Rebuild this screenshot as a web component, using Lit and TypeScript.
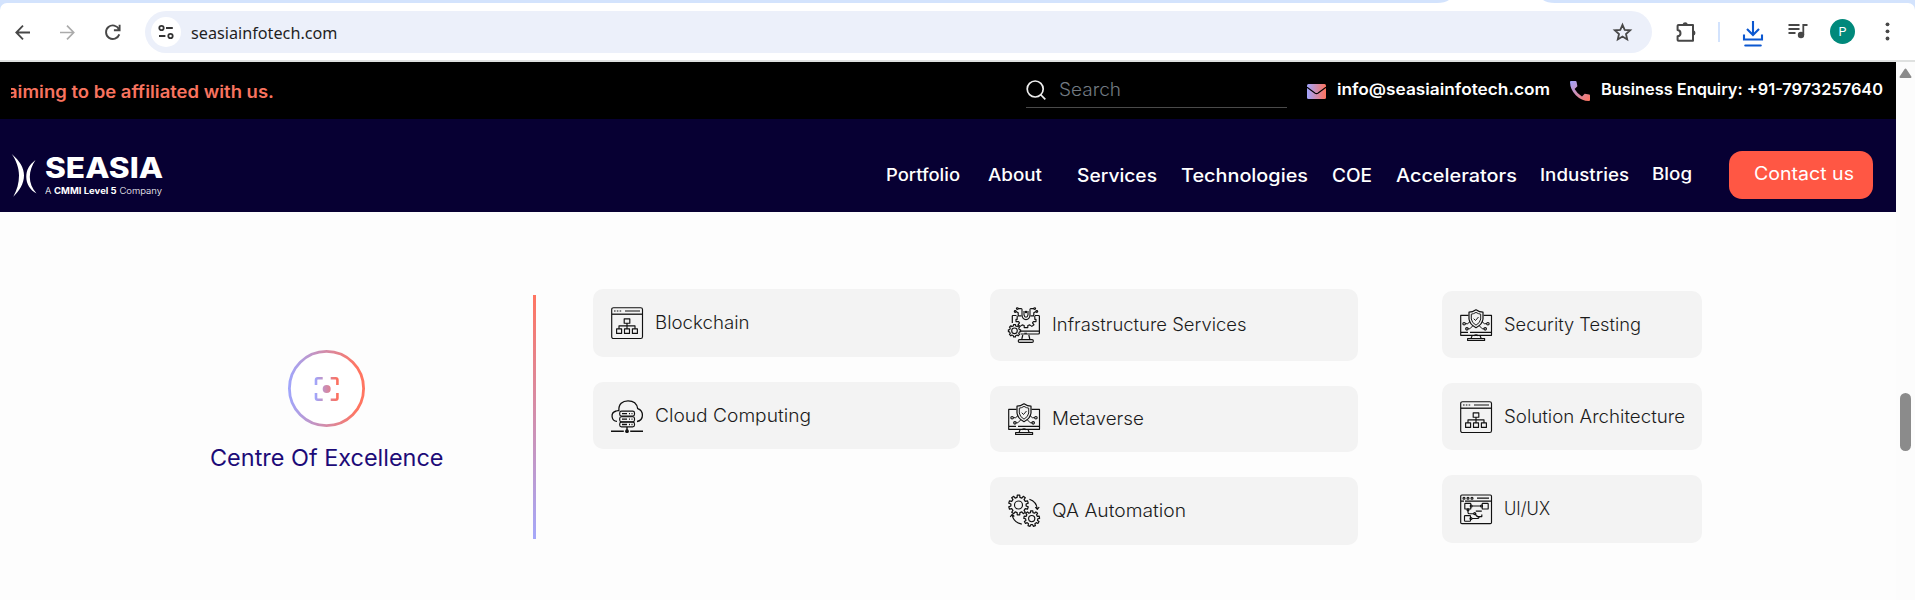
import { LitElement, html, svg, css } from "lit";
import { customElement, property } from "lit/decorators.js";

/** A single line of text stretched (or tracked) to an exact measure. */
@customElement("fit-text")
class FitText extends LitElement {
  @property({ type: Number }) measure = 0;
  @property({ type: Boolean }) track = false;
  static styles = css`
    :host { display: block; flex: none; white-space: nowrap; }
    .line { display: inline-block; transform-origin: 0 50%; }
  `;
  firstUpdated() {
    const line = this.renderRoot.querySelector(".line") as HTMLElement;
    this.style.width = this.measure + "px";
    const natural = line.getBoundingClientRect().width;
    const count = (this.textContent || "").trim().length;
    if (!natural || !count) return;
    if (this.track) line.style.letterSpacing = (this.measure - natural) / count + "px";
    else line.style.transform = `scaleX(${this.measure / natural})`;
  }
  render() {
    return html`<span class="line"><slot></slot></span>`;
  }
}

const gear = (cx: number, cy: number, ro: number, ri: number, n: number) => {
  const pts: string[] = [];
  const step = (Math.PI * 2) / n;
  for (let i = 0; i < n; i++) {
    const a = i * step - Math.PI / 2;
    for (const [r, o] of [[ri, -0.29], [ro, -0.2], [ro, 0.2], [ri, 0.29]]) {
      pts.push(`${(cx + r * Math.cos(a + o * step)).toFixed(2)} ${(cy + r * Math.sin(a + o * step)).toFixed(2)}`);
    }
  }
  return "M" + pts.join("L") + "Z";
};

const chart = svg`
  <rect x=".7" y=".7" width="30.8" height="30.8" rx="1.8"/>
  <path d="M1 7.2H31" stroke-width="1.3"/>
  <path d="M3 4h1.6M5.8 4h1.6M8.6 4h1.6M14 4h15" stroke-width="1.2"/>
  <path d="M13.2 11.8h5.6v4.4h-5.6zM16 16.2v5.6M8 21.8v-3h16v3M5.6 21.8h5v4.6h-5zM13.5 21.8h5v4.6h-5zM21.4 21.8h5v4.6h-5z" stroke-width="1.15"/>`;

const shield = svg`
  <path d="M8.5 6.4H.7V26.3H31.5V6.4H23.6M1 23.4H8M10 23.4H31.2" stroke-width="1.15"/>
  <path d="M12.2 26.6L11 29.4M20 26.6l1.2 2.8M14 26.7q2-1.6 4.2 0M7.6 29.6H24.6V31.5H7.6z" stroke-width="1.15"/>
  <path d="M16 .8Q19.5 3.2 23 3.2V10Q22.3 15.6 16 18.7Q9.7 15.6 9 10V3.2Q12.5 3.2 16 .8z" stroke-width="1.2"/>
  <path d="M16 3.4Q18.6 5 20.7 5.2V10Q20.2 13.8 16 16.2Q11.8 13.8 11.3 10V5.2Q13.4 5 16 3.4zM13.7 9.7l1.8 1.8 3-3.5" stroke-width=".95"/>
  <path d="M5.3 14.7h2.4l2.4-2.3M26.7 14.7h-2.4l-2.4-2.3M8.1 19.8h1.7l3-3M24 19.8h-1.7l-3-3" stroke-width="1"/>
  <circle cx="4.1" cy="14.7" r="1.25"/><circle cx="27.9" cy="14.7" r="1.25"/>
  <circle cx="6.9" cy="19.8" r="1.25"/><circle cx="25.2" cy="19.8" r="1.25"/>`;

const cloud = svg`
  <path d="M6 21.3C.4 21.3-1.2 12.7 5.2 11C7 10.4 7.2 10.8 7.9 10.6C7.3 4 11.6.8 17 .8C22.7.8 26 4 26.7 8.6C33 10.6 33.2 20.4 26 21.5" stroke-width="1.3"/>
  <rect x="8.7" y="11.1" width="14.8" height="5" rx="1.8"/>
  <rect x="8.7" y="16.7" width="14.8" height="5" rx="1.8"/>
  <rect x="8.7" y="22.1" width="14.8" height="4.8" rx="1.8"/>
  <path d="M11 13.7h5M18 13.7h1M20.5 13.7h1M11 19.2h5M18 19.2h1M20.5 19.2h1M11 24.5h5M18 24.5h1M20.5 24.5h1" stroke-width="1.3"/>
  <path d="M16 27v3M0 31.2H12.8M19.2 31.2H32" stroke-width="1.4"/><circle cx="16" cy="31.2" r="1.3" fill="#111"/>`;

const infra = svg`
  <path d="M8.5 8.5H5Q4.3 8.5 4.3 9.3V16M12.6 27H30.2Q31.4 27 31.4 26V9.3Q31.4 8.5 30.4 8.5H27M13 24.2H31.4M14.8 28l-1 4M20.8 28l1 4" stroke-width="1.2"/>
  <rect x="10.3" y="32.6" width="15" height="2.8" rx="1.2"/>
  <path d="M14 1.8V8q.4 4.6 4 4.6T22 8V1.8M16 4V7.8q.5 2.4 2 2.4t2-2.4V4M16.3 26.2h2.6" stroke-width="1.1"/>
  <path d="M9.2 9v3.3h-1.2v2.3h2.6l.9 1.2-1.5 2 2.2 1.6 2-1.5 2 .6v2.1h3.6v-2.1l2-.6 2 1.5 2.2-1.6-1.5-2 .9-1.2h2.6v-2.3h-1.2V9" stroke-width="1.15"/>
  <path d="M10 1.6h3.8M8 4.5l2.2 1.3v3h3.4M26 1.6h-3.8M28 4.5l-2.2 1.3v3h-3.4" stroke-width="1.2"/>
  <circle cx="9.3" cy="1.6" r=".9"/><circle cx="7.2" cy="4.5" r=".9"/><circle cx="26.7" cy="1.6" r=".9"/><circle cx="28.8" cy="4.5" r=".9"/><circle cx="18" cy="5" r=".7"/>
  <path d=${gear(6.5, 23.8, 6.2, 5, 8)} fill="#f3f3f3"/><circle cx="6.5" cy="23.8" r="2.8"/>`;

const gears = svg`
  <path d=${gear(10.5, 10, 9.9, 7.7, 10)} stroke-width="1.25"/><circle cx="10.5" cy="10" r="4"/>
  <path d=${gear(23.7, 23.6, 7.9, 6.1, 9)} stroke-width="1.2"/><circle cx="23.7" cy="23.6" r="3.1"/>
  <path d="M21.4 4.2Q28.6 6.6 29.3 14M27.3 12.2l2 2.2 1.9-2.4M13.8 29.1Q5.5 27.5 4.2 20M2.2 21.8l2-2.3 2.1 2" stroke-width="1.2"/>`;

const flow = svg`
  <rect x=".7" y="1" width="30.8" height="28.6" rx="1.2"/>
  <path d="M1 7.2H4M5 7.2H31M17 4.2H29" stroke-width="1.2"/>
  <circle cx="4" cy="4.2" r="1"/><circle cx="8" cy="4.2" r="1"/><circle cx="12" cy="4.2" r="1"/>
  <rect x="4.8" y="9.4" width="6" height="5.6" rx=".6"/><rect x="22.2" y="9.4" width="6" height="5.6" rx=".6"/><rect x="4.5" y="21.6" width="6" height="5.6" rx=".6"/>
  <path d="M12.2 12H20.6M8 16v2.5q0 1.3 1.4 1.3H14M12 24.5h5q2.2 0 2.2-2" stroke-width="1.1"/>
  <path d="M15.8 17.2H21.8M21.8 20.6V22.6H18Q15.4 22 15.4 19" stroke-width="1.2"/>
  <circle cx="11.2" cy="12" r="1"/><circle cx="21.5" cy="12" r="1"/><circle cx="8" cy="15.8" r="1"/><circle cx="14.7" cy="19.6" r="1"/><circle cx="11" cy="24.5" r="1"/>`;

const icons: Record<string, unknown> = { chart, shield, cloud, infra, gears, flow };

@customElement("service-card")
class ServiceCard extends LitElement {
  @property() icon = "chart";
  @property() label = "";
  @property({ type: Number }) measure = 0;
  @property({ type: Number }) height = 68;
  static styles = css`
    :host { display: block; }
    .card { box-sizing: border-box; display: flex; align-items: center; gap: 12px; padding-left: 18px; border-radius: 10px; background: #f3f3f3; }
    .icon { flex: none; width: 32px; overflow: visible; fill: none; stroke: #111; stroke-width: 1.15; stroke-linejoin: round; }
    .label { font: 300 18px/27px Inter, sans-serif; color: #1b1b1b; margin-bottom: 1px; }
  `;
  render() {
    const h = this.icon === "infra" ? 36 : this.icon === "flow" ? 31 : 32;
    return html`<div class="card" style="height:${this.height}px">
      <svg class="icon" height=${h} viewBox="0 0 32 ${h}">${icons[this.icon]}</svg>
      <fit-text class="label" .measure=${this.measure}>${this.label}</fit-text>
    </div>`;
  }
}

type Card = [string, string, number, number];
const columns: { cls: string; cards: Card[] }[] = [
  { cls: "first", cards: [["chart", "Blockchain", 94.5, 68], ["cloud", "Cloud Computing", 156, 67]] },
  { cls: "second", cards: [["infra", "Infrastructure Services", 194.5, 72], ["shield", "Metaverse", 92, 66], ["gears", "QA Automation", 134, 68]] },
  { cls: "third", cards: [["shield", "Security Testing", 137, 67], ["chart", "Solution Architecture", 181, 67], ["flow", "UI/UX", 46, 68]] },
];

/* label, width, space before, type size, baseline drop */
const nav: [string, number, number, number, number][] = [
  ["Portfolio", 74, 0, 17, 0],
  ["About", 54, 28, 17, 0],
  ["Services", 80, 34.5, 18, 1],
  ["Technologies", 127, 24, 18, 1],
  ["COE", 40, 24, 18, 1],
  ["Accelerators", 121, 24, 18, 1],
  ["Industries", 89, 23, 17, 0],
  ["Blog", 40, 23, 17, -1],
];

@customElement("app-root")
class AppRoot extends LitElement {
  static styles = css`
    :host { display: flex; flex-direction: column; width: 1915px; height: 600px; overflow: hidden; background: #fdfdfd; font-family: Inter, sans-serif; }
    svg { display: block; flex: none; overflow: visible; }
    .strip { flex: none; height: 3px; background: #d3e3fd; }
    .tab { display: block; width: 1915px; height: 3px; }
    .toolbar-wrap { flex: none; height: 57px; background: #d3e3fd; border-bottom: 2px solid #dfe1e0; }
    .toolbar { box-sizing: border-box; height: 57px; display: flex; align-items: center; background: #fff; border-radius: 7px 7px 0 0; padding: 1px 0 0 15px; }
    .toolbar .forward { margin-left: 30px; }
    .toolbar .reload { margin-left: 29px; }
    .pill { box-sizing: border-box; flex: none; margin-left: 23px; width: 1507px; height: 42px; border-radius: 21px; background: #ecf0fa; display: flex; align-items: center; padding: 0 20px 0 6px; }
    .site { width: 30px; height: 30px; border-radius: 50%; background: #fff; display: grid; place-items: center; }
    .url { margin-left: 10px; padding-top: 1px; font: 400 17px/24px "Noto Sans", sans-serif; color: #1f1f1f; }
    .star { margin-left: auto; }
    .ext { margin-left: 24px; }
    .divider { width: 2px; height: 20px; margin-left: 21px; background: #d3e3fd; flex: none; }
    .download { margin: 4px 0 0 22px; }
    .media { margin: -3px 0 0 24px; }
    .avatar { flex: none; margin: -1px 0 0 22px; width: 25px; height: 25px; border-radius: 50%; background: #00897b; color: #fff; font: 400 12.5px/25px Roboto, sans-serif; text-align: center; }
    .menu { margin: -1px 0 0 30px; }
    .body { flex: 1; display: flex; min-height: 0; }
    .page { width: 1896px; flex: none; }
    .top { height: 57px; background: #000; display: flex; align-items: flex-start; color: #fff; }
    .ticker { box-sizing: border-box; width: 264px; margin: 18px 0 0 11px; overflow: hidden; display: flex; color: #f8735f; font: 600 17px/25px Inter, sans-serif; }
    .ticker fit-text { margin-left: -4px; }
    .search { box-sizing: border-box; width: 261px; height: 46px; margin-left: 751px; border-bottom: 1px solid #4a4a4a; display: flex; padding-top: 18px; }
    .search .hint { margin: -3px 0 0 13px; font: 300 18px/25px Inter, sans-serif; color: #727a82; }
    .mail { margin: 22px 0 0 20px; }
    .phone { margin: 19px 0 0 20px; }
    .contact { margin: 15px 0 0 11px; font: 600 16px/25px Inter, sans-serif; }
    .header { height: 93px; background: #070033; display: flex; align-items: flex-start; color: #fff; }
    .mark { margin: 34px 0 0 11px; }
    .brand { margin: 34px 0 0 8px; width: 118px; }
    .name { font: 800 28px/30px Inter, sans-serif; }
    .tag { margin-top: 1.5px; font: 300 9px/12px Inter, sans-serif; }
    .tag b { font-weight: 700; }
    .nav { display: flex; margin: 43px 0 0 723px; font-weight: 500; line-height: 26px; }
    .button { box-sizing: border-box; width: 144px; height: 48px; margin: 32px 0 0 auto; padding: 10px 0 0 24.5px; border-radius: 13px; background: #ff5744; font: 400 18px/26px Inter, sans-serif; }
    .header { padding-right: 23px; }
    .centre { display: flex; align-items: flex-start; padding-top: 77px; }
    .topic { box-sizing: border-box; width: 533px; padding: 60.5px 0 0 210px; }
    .badge { margin-left: 78px; }
    .title { margin-top: 15px; font: 400 22.5px/32px Inter, sans-serif; color: #1c0b78; }
    .rule { width: 3px; height: 244px; margin-top: 6px; background: linear-gradient(#ff7561, #a5a8fa); }
    .col { display: flex; flex-direction: column; gap: 25px; }
    .first { width: 367px; margin-left: 57px; }
    .second { width: 368px; margin-left: 30px; }
    .third { width: 260px; margin: 2px 0 0 84px; }
    .scroll { flex: 1; background: #fcfcfc; display: flex; flex-direction: column; align-items: center; }
    .thumb { width: 11px; height: 58px; margin-top: 315px; border-radius: 5.5px; background: #8b8b8b; }
    .up { margin-top: 6px; }
  `;

  chrome() {
    return html`
      <div class="strip">
        <svg class="tab" viewBox="0 0 1915 3"><path d="M1437 3Q1445 3 1449 0H1543Q1547 3 1555 3Z" fill="#fff"/></svg>
      </div>
      <div class="toolbar-wrap"><div class="toolbar">
        <svg width="15" height="15" viewBox="0 0 15 15" fill="none" stroke="#474747" stroke-width="1.8"><path d="M15 7.5H1.5M8 .7L1.3 7.5 8 14.3"/></svg>
        <svg class="forward" width="15" height="15" viewBox="0 0 15 15" fill="none" stroke="#ababab" stroke-width="1.7"><path d="M0 7.5H13.5M7 .7l6.7 6.8L7 14.3"/></svg>
        <svg class="reload" width="18" height="17" viewBox="0 0 18 17" fill="none" stroke="#474747" stroke-width="1.9"><path d="M15 5.3A6.8 6.8 0 1 0 15.3 10.4M15.6 .8V6.3H9.9"/></svg>
        <div class="pill">
          <div class="site"><svg width="16" height="16" viewBox="0 0 16 16" fill="none" stroke="#333" stroke-width="1.8"><circle cx="3.5" cy="4" r="2.2"/><path d="M8 4h6.8M1 12h6.4"/><circle cx="12.5" cy="12" r="2.2"/></svg></div>
          <fit-text class="url" .measure=${146.5}>seasiainfotech.com</fit-text>
          <svg class="star" width="19" height="18" viewBox="0 0 19 18" fill="none" stroke="#474747" stroke-width="1.8"><path d="M9.5 1.8L11.7 6.8 17.2 7.3 13 11 14.2 16.4 9.5 13.5 4.8 16.4 6 11 1.8 7.3 7.3 6.8Z"/></svg>
        </div>
        <svg class="ext" width="21" height="21" viewBox="0 0 21 21"><path d="M2.5 3H17V18.8H2.5Q1.6 18.8 1.6 18V14.3Q4.5 14 4.5 11.2T1.6 8V3.8Q1.6 3 2.5 3Z" fill="none" stroke="#474747" stroke-width="2" stroke-linejoin="round"/><path d="M6.500 2.400a2.800 2.800 0 0 1 5.400 0zM17.600 8.200a2.900 2.900 0 0 1 0 5.400z" fill="#474747"/></svg>
        <div class="divider"></div>
        <svg class="download" width="22" height="28" viewBox="0 0 22 28" fill="none" stroke="#0b57d0" stroke-width="2.1"><path d="M11 1V14.500M5 9l6 6 6-6M2 14.500V19.500H20V14.500"/><path d="M3.300 25.500H18.700" stroke-width="2.200" stroke-linecap="round"/></svg>
        <svg class="media" width="20" height="17" viewBox="0 0 20 17" fill="none" stroke="#474747" stroke-width="1.8"><path d="M.5 3H11.500M.5 7H11.500M.5 11H7.500M15.300 13V3H19.500"/><circle cx="13" cy="13" r="3.200" fill="#474747" stroke="none"/></svg>
        <div class="avatar">P</div>
        <svg class="menu" width="5" height="19" viewBox="0 0 5 19" fill="#474747"><circle cx="2.500" cy="2.300" r="1.900"/><circle cx="2.500" cy="9.300" r="1.900"/><circle cx="2.500" cy="16.500" r="1.900"/></svg>
      </div></div>`;
  }

  topBar() {
    return html`<div class="top">
      <div class="ticker"><fit-text .measure=${267}>aiming to be affiliated with us.</fit-text></div>
      <div class="search">
        <svg width="20" height="20" viewBox="0 0 20 20" fill="none" stroke="#eee" stroke-width="1.7"><circle cx="9.200" cy="9" r="8"/><path d="M14.500 14.500l4.800 4.800"/></svg>
        <fit-text class="hint" .measure=${62}>Search</fit-text>
      </div>
      <svg class="mail" width="19" height="15" viewBox="0 0 19 15"><defs><linearGradient id="mg"><stop offset="0" stop-color="#a0a5ff"/><stop offset="1" stop-color="#ff735c"/></linearGradient></defs><rect width="19" height="15" rx="1.500" fill="url(#mg)"/><path d="M0 3.200L8.200 9.200Q9.500 10 10.800 9.200L19 3.200" fill="none" stroke="#000" stroke-width="1.100"/></svg>
      <fit-text class="contact" .measure=${213}>info@seasiainfotech.com</fit-text>
      <svg class="phone" width="20" height="20" viewBox="0 0 20 20"><defs><linearGradient id="pg" x2="1" y2="1"><stop offset="0" stop-color="#a0a5ff"/><stop offset="1" stop-color="#ff735c"/></linearGradient></defs><path d="M0 1Q0 0 1 0H5.600Q6.400 0 6.600.9L7.400 5.300 4.600 8Q7.400 13 12 15.500L14.700 12.700 19.200 13.500Q20 13.700 20 14.500V19Q20 20 19 20Q11.500 20 5.800 14.200T0 1Z" fill="url(#pg)"/></svg>
      <fit-text class="contact" .measure=${282}>Business Enquiry: +91-7973257640</fit-text>
    </div>`;
  }

  header() {
    return html`<div class="header">
      <svg class="mark" width="26" height="44" viewBox="11 153 26 44" fill="#fff"><path d="M11.700 154C20 161 24 168 24 175.500C24 184 19 191 13.300 196.700C17 190 19 183 19 175.500C19 168 16 160 11.700 154ZM35.500 160C29 165 26.300 170 26.300 177C26.300 184 30 190 36.500 193.500C32 188 29.800 183 29.800 177C29.800 171 32 165 35.500 160Z"/></svg>
      <div class="brand">
        <fit-text class="name" .measure=${118}>SEASIA</fit-text>
        <fit-text class="tag" .measure=${117}>A <b>CMMI Level 5</b> Company</fit-text>
      </div>
      <div class="nav">${nav.map(([label, w, gap, size, drop]) => html`<fit-text .measure=${w} style="margin-left:${gap}px;margin-top:${drop}px;font-size:${size}px">${label}</fit-text>`)}</div>
      <div class="button"><fit-text .measure=${100}>Contact us</fit-text></div>
    </div>`;
  }

  render() {
    return html`${this.chrome()}
      <div class="body">
        <div class="page">
          ${this.topBar()}${this.header()}
          <div class="centre">
            <div class="topic">
              <svg class="badge" width="77" height="77" viewBox="0 0 77 77" fill="none">
                <defs>
                  <linearGradient id="ring" gradientUnits="userSpaceOnUse" x1="0" x2="77"><stop offset="0" stop-color="#9fa6fd"/><stop offset=".9" stop-color="#ff7561"/></linearGradient>
                  <linearGradient id="focus" gradientUnits="userSpaceOnUse" x1="27" x2="50"><stop offset="0" stop-color="#9fa6fd"/><stop offset="1" stop-color="#ff6f5b"/></linearGradient>
                </defs>
                <circle cx="38.500" cy="38.500" r="37.100" fill="#fff" stroke="url(#ring)" stroke-width="2.800"/>
                <path d="M28 35V30Q28 28.300 29.700 28.300H34.700M42.700 28.300H47.700Q49.400 28.300 49.400 30V35M49.400 43V48Q49.400 49.700 47.700 49.700H42.700M34.700 49.700H29.700Q28 49.700 28 48V43" stroke="url(#focus)" stroke-width="2.600"/>
                <circle cx="38.700" cy="39" r="4" fill="url(#focus)"/>
              </svg>
              <fit-text class="title" .measure=${233.5}>Centre Of Excellence</fit-text>
            </div>
            <div class="rule"></div>
            ${columns.map((c) => html`<div class="col ${c.cls}">${c.cards.map(([icon, label, w, h]) => html`<service-card .icon=${icon} .label=${label} .measure=${w} .height=${h}></service-card>`)}</div>`)}
          </div>
        </div>
        <div class="scroll">
          <svg class="up" width="13" height="10" viewBox="0 0 13 10"><path d="M6.500 1.500L11.500 9H1.500Z" fill="#8b8b8b" stroke="#8b8b8b" stroke-width="2" stroke-linejoin="round"/></svg>
          <div class="thumb"></div>
        </div>
      </div>`;
  }
}
